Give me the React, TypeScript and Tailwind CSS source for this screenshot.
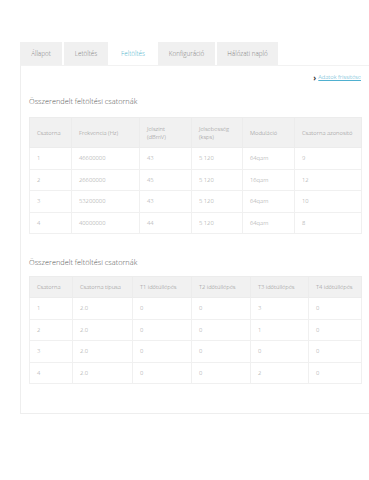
const tabs = ["Állapot", "Letöltés", "Feltöltés", "Konfiguráció", "Hálózati napló"];
const tabWidths = ["w-[42px]", "w-[44px]", "w-[46px]", "w-[57px]", "w-[61px]"];

const upHead = ["Csatorna", "Frekvencia (Hz)", "Jelszint\n(dBmV)", "Jelsebesség\n(ksps)", "Moduláció", "Csatorna azonosító"];
const upCols = ["w-[42px]", "w-[68px]", "w-[52px]", "w-[51px]", "w-[52px]", "w-[67px]"];
const upRows = [
  ["1", "46600000", "43", "5 120", "64qam", "9"],
  ["2", "26600000", "45", "5 120", "16qam", "12"],
  ["3", "53200000", "43", "5 120", "64qam", "10"],
  ["4", "40000000", "44", "5 120", "64qam", "8"],
];

const tHead = ["Csatorna", "Csatorna típusa", "T1 időtúllépés", "T2 időtúllépés", "T3 időtúllépés", "T4 időtúllépés"];
const tCols = ["w-[43px]", "w-[60px]", "w-[59px]", "w-[59px]", "w-[58px]", "w-[53px]"];
const tRows = [
  ["1", "2.0", "0", "0", "3", "0"],
  ["2", "2.0", "0", "0", "1", "0"],
  ["3", "2.0", "0", "0", "0", "0"],
  ["4", "2.0", "0", "0", "2", "0"],
];

function DataTable({ head, cols, rows, headH }: { head: string[]; cols: string[]; rows: string[][]; headH: string }) {
  return (
    <table className="ml-[8px] w-[332px] table-fixed border-collapse text-[5.8px] font-light text-[#9a9a9a]">
      <colgroup>
        {cols.map((c, i) => (
          <col key={i} className={c} />
        ))}
      </colgroup>
      <thead>
        <tr className={`${headH} bg-[#f1f1f1]`}>
          {head.map((h, i) => (
            <th key={i} className="whitespace-pre-line border border-[#ececec] pl-[7px] pr-[2px] text-left font-light leading-[8px] text-[#8c8c8c]">
              {h}
            </th>
          ))}
        </tr>
      </thead>
      <tbody>
        {rows.map((r, i) => (
          <tr key={i} className="h-[21.5px]">
            {r.map((v, j) => (
              <td key={j} className="border border-[#f0f0f0] pl-[7px]">
                {v}
              </td>
            ))}
          </tr>
        ))}
      </tbody>
    </table>
  );
}

export default function App() {
  return (
    <div className="h-[480px] w-[369px] overflow-hidden bg-white pt-[42px] pl-[20px]" style={{ fontFamily: '"Open Sans", sans-serif' }}>
      <div className="flex h-[23px] gap-[2px]">
        {tabs.map((t, i) => (
          <div
            key={t}
            className={`${tabWidths[i]} flex items-center justify-center text-[6.3px] font-light ${
              i === 2 ? "bg-white text-[#4db3cc]" : "bg-[#f0f0f0] text-[#808080]"
            }`}
          >
            {t}
          </div>
        ))}
      </div>
      <div className="h-[349px] w-[349px] border-l border-b border-t border-[#eeeeee] border-t-[#f2f2f2]">
        <div className="flex h-[23px] items-center justify-end pr-[8px]">
          <span className="mr-[2px] text-[8px] font-bold leading-none text-[#333]">›</span>
          <span className="text-[5.8px] font-light leading-none text-[#4fb0d0] underline">Adatok frissítése</span>
        </div>
        <div className="ml-[8px] mt-[7px] mb-[10px] text-[7.4px] font-light text-[#555]">Összerendelt feltöltési csatornák</div>
        <DataTable head={upHead} cols={upCols} rows={upRows} headH="h-[30px]" />
        <div className="ml-[8px] mt-[23px] mb-[8px] text-[7.4px] font-light text-[#555]">Összerendelt feltöltési csatornák</div>
        <DataTable head={tHead} cols={tCols} rows={tRows} headH="h-[21px]" />
      </div>
    </div>
  );
}
